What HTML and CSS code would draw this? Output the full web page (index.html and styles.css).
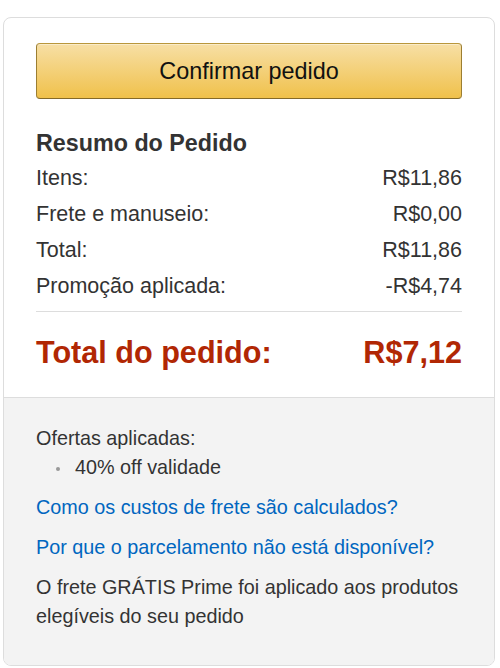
FILE: index.html
```html
<!DOCTYPE html>
<html lang="pt-BR">

<head>
    <meta charset="UTF-8">
    <meta name="viewport" content="width=device-width, initial-scale=1.0">
    <title>Resumo do Pedido</title>
    <link rel="stylesheet" href="styles.css">
</head>

<body>
    <div class="box">
        <div class="box-inner">
            <button class="btn-confirm" type="button">Confirmar pedido</button>

            <h3 class="summary-title">Resumo do Pedido</h3>
            <div class="row"><span>Itens:</span><span>R$11,86</span></div>
            <div class="row"><span>Frete e manuseio:</span><span>R$0,00</span></div>
            <div class="row"><span>Total:</span><span>R$11,86</span></div>
            <div class="row"><span>Promoção aplicada:</span><span>-R$4,74</span></div>
            <hr class="divider">
            <div class="row grand-total"><span>Total do pedido:</span><span>R$7,12</span></div>
        </div>

        <div class="box-footer">
            <p class="offers">Ofertas aplicadas:</p>
            <ul class="offer-list">
                <li>40% off validade</li>
            </ul>
            <p><a href="#">Como os custos de frete são calculados?</a></p>
            <p><a href="#">Por que o parcelamento não está disponível?</a></p>
            <p>O frete GRÁTIS Prime foi aplicado aos produtos elegíveis do seu pedido</p>
        </div>
    </div>
</body>

</html>
```

FILE: styles.css
```css
body {
    margin: 0;
    padding: 17px 5px 0 3px;
    font-family: "Liberation Sans", Arial, sans-serif;
    font-size: 19.8px;
    color: #333;
    background: #fff;
}

.box {
    border: 1px solid #ddd;
    border-radius: 8px;
    overflow: hidden;
}

.box-inner {
    padding: 25px 32px 27px 32px;
}

.btn-confirm {
    display: block;
    width: 100%;
    height: 56px;
    border: 1px solid #a88734;
    border-color: #b9973c #9c7e31 #846a29;
    border-radius: 4px;
    background: linear-gradient(to bottom, #f7dfa5, #f0c14b);
    box-shadow: inset 0 1px 0 rgba(255, 255, 255, 0.4);
    font-family: inherit;
    font-size: 23.4px;
    color: #111;
    cursor: pointer;
}

.summary-title {
    margin: 28px 0 0 0;
    font-size: 23.3px;
    line-height: 33px;
    font-weight: bold;
    color: #333;
}

.row {
    display: flex;
    justify-content: space-between;
    font-size: 21.5px;
    line-height: 36px;
}

.divider {
    border: none;
    border-top: 1px solid #ddd;
    margin: 7px 0 22px 0;
}

.grand-total {
    font-size: 30.6px;
    font-weight: bold;
    color: #b12704;
}

.box-footer {
    background: #f3f3f3;
    border-top: 1px solid #ddd;
    padding: 26px 32px 34px 32px;
    line-height: 29px;
}

.box-footer p {
    margin: 11px 0 0 0;
}

.box-footer p.offers {
    margin-top: 0;
}

.offer-list {
    margin: 0;
    padding-left: 39px;
    list-style: none;
}

.offer-list li {
    position: relative;
}

.offer-list li::before {
    content: "";
    position: absolute;
    left: -19px;
    top: 14px;
    width: 4px;
    height: 4px;
    border-radius: 50%;
    background: #999;
}

a {
    color: #0066c0;
    text-decoration: none;
}

a:hover {
    color: #c45500;
    text-decoration: underline;
}
```
